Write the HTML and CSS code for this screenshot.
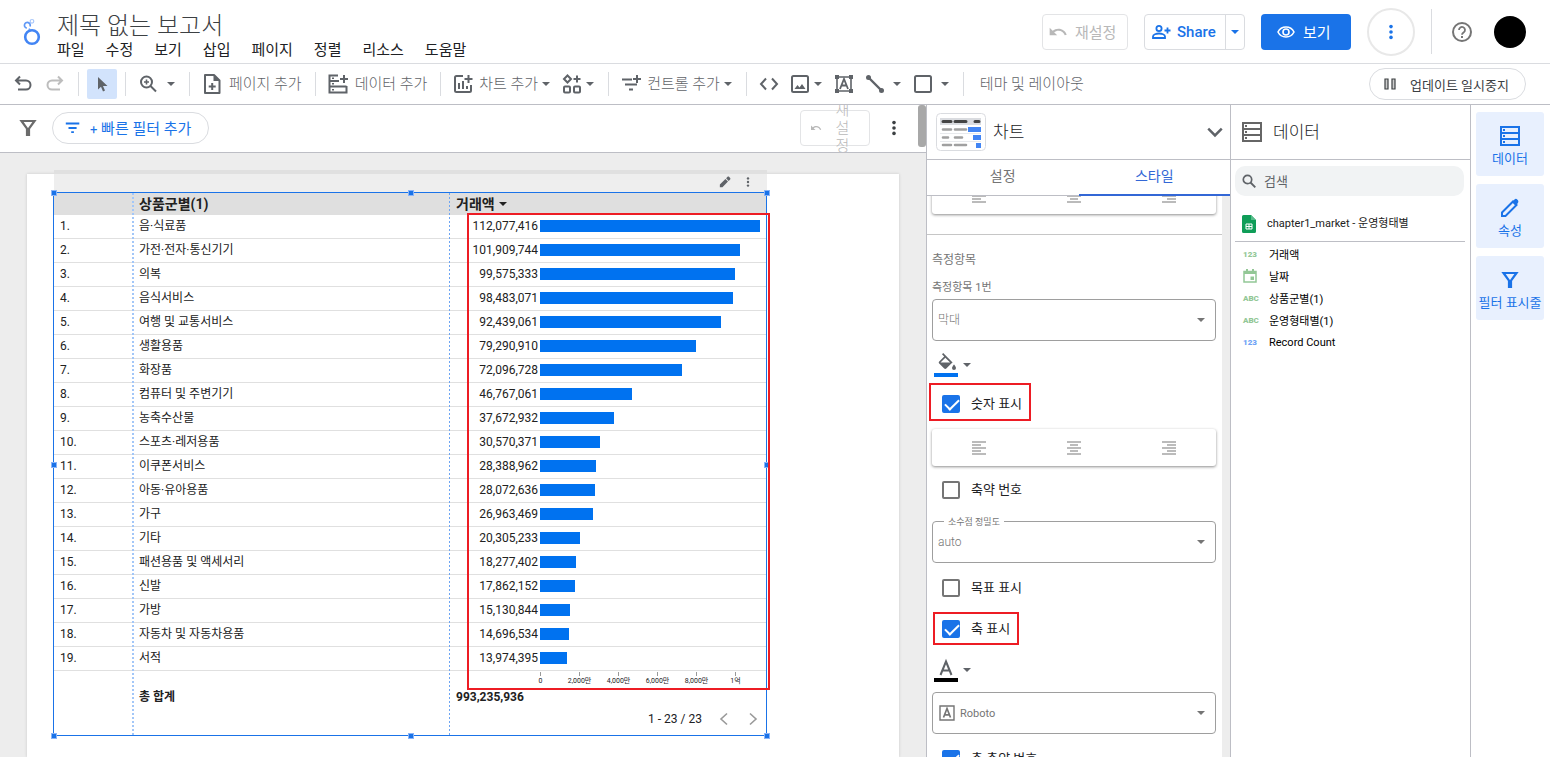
FILE: index.html
```html
<!DOCTYPE html>
<html lang="ko">
    <head>
        <meta charset="UTF-8" />
        <meta name="viewport" content="width=device-width, initial-scale=1.0" />
        <title>제목 없는 보고서</title>
        <link rel="stylesheet" href="styles.css">
    </head>
    <body>
        <!--Icons-->
        <svg class="sprite" aria-hidden="true">
            <symbol id="i-down" viewBox="0 0 10 10"><path d="M1 3h8L5 7z" fill="currentColor"/></symbol>
            <symbol id="i-undo" viewBox="0 0 20 20"><path d="M7 2.500 3 6.500l4 4M3.500 6.500H13a4.500 4.500 0 0 1 0 9H5" fill="none" stroke="currentColor" stroke-width="2"/></symbol>
            <symbol id="i-redo" viewBox="0 0 20 20"><path d="m13 2.500 4 4-4 4M16.500 6.500H7a4.500 4.500 0 0 0 0 9h8" fill="none" stroke="currentColor" stroke-width="2"/></symbol>
            <symbol id="i-reset" viewBox="0 0 24 24"><path d="M12.500 8c-2.650 0-5.050.99-6.900 2.600L2 7v9h9l-3.620-3.620c1.390-1.160 3.160-1.880 5.120-1.880 3.540 0 6.550 2.310 7.600 5.500l2.370-.78C21.080 11.030 17.150 8 12.500 8z" fill="currentColor"/></symbol>
            <symbol id="i-share" viewBox="0 0 20 20"><g fill="none" stroke="currentColor" stroke-width="1.800"><circle cx="8" cy="6.500" r="2.600"/><path d="M2 16v-1.500c0-2 3.500-3 6-3s6 1 6 3V16zM16.500 5.500v6M13.500 8.500h6"/></g></symbol>
            <symbol id="i-eye" viewBox="0 0 20 20"><g fill="none" stroke="currentColor" stroke-width="1.600"><path d="M2 10c1.600-3.200 4.500-5 8-5s6.400 1.800 8 5c-1.600 3.200-4.500 5-8 5s-6.400-1.800-8-5z"/><circle cx="10" cy="10" r="3"/></g></symbol>
            <symbol id="i-more" viewBox="0 0 20 20"><g fill="currentColor"><circle cx="10" cy="4" r="2"/><circle cx="10" cy="10" r="2"/><circle cx="10" cy="16" r="2"/></g></symbol>
            <symbol id="i-help" viewBox="0 0 20 20"><circle cx="10" cy="10" r="9" fill="none" stroke="currentColor" stroke-width="2"/><path d="M7 8a3 3 0 1 1 4.800 2.300c-1 .7-1.800 1.300-1.800 2.500" fill="none" stroke="currentColor" stroke-width="1.800"/><path d="M9 14h2v2H9z" fill="currentColor"/></symbol>
            <symbol id="i-cursor" viewBox="0 0 20 20"><path d="M6 3v12.500l3-2.800 2 4.800 2-.9-2-4.600h4.500z" fill="currentColor"/></symbol>
            <symbol id="i-zoom" viewBox="0 0 20 20"><g fill="none" stroke="currentColor" stroke-width="2"><circle cx="8.500" cy="8" r="5.500"/><path d="m12.500 12 5.500 5.500"/><path d="M8.500 5.500v5M6 8h5" stroke-width="1.600"/></g></symbol>
            <symbol id="i-page" viewBox="0 0 20 20"><path d="M3 1h9l5.500 5.500V19H3z" fill="none" stroke="currentColor" stroke-width="2" stroke-linejoin="round"/><path d="M11.500 1v6h6z" fill="currentColor"/><path d="M10.200 9v7M6.700 12.500h7" stroke="currentColor" stroke-width="2"/></symbol>
            <symbol id="i-data" viewBox="0 0 20 20"><g fill="none" stroke="currentColor" stroke-width="2"><path d="M10 1.500H1.500v17h17V12M1.500 7H11M1.500 12.500h17M16 1v8M12 5h8"/></g><path d="M4 3.500h2v1.500H4zM4 9h2v1.500H4zM4 15h2v1.500H4z" fill="currentColor"/></symbol>
            <symbol id="i-chart" viewBox="0 0 20 20"><path d="M10 2H3.500A1.500 1.500 0 0 0 2 3.500v13A1.500 1.500 0 0 0 3.500 18h13a1.500 1.500 0 0 0 1.500-1.500V11M15.500 1v8M11.500 5h8" fill="none" stroke="currentColor" stroke-width="2"/><path d="M5 9h2v6H5zM9 7h2v8H9zM13 12h2v3h-2z" fill="currentColor"/></symbol>
            <symbol id="i-parts" viewBox="0 0 20 20"><g fill="none" stroke="currentColor" stroke-width="2"><path d="m5.500 1.500 3.500 3.500-3.500 3.500L2 5zM15 1.500v7M11.500 5h7"/><rect x="2" y="12.500" width="6" height="6" rx="1"/><rect x="12" y="12.500" width="6" height="6" rx="1"/></g></symbol>
            <symbol id="i-control" viewBox="0 0 20 20"><path d="M1 5.500h10M4 10.500h12M8 15.500h4M16 1v8M12 5h8" fill="none" stroke="currentColor" stroke-width="2"/></symbol>
            <symbol id="i-code" viewBox="0 0 20 20"><path d="M7 4.500 2 10l5 5.500M13 4.500l5 5.500-5 5.500" fill="none" stroke="currentColor" stroke-width="2"/></symbol>
            <symbol id="i-image" viewBox="0 0 20 20"><rect x="2" y="2" width="16" height="16" rx="1.500" fill="none" stroke="currentColor" stroke-width="2"/><path d="m4.500 15 3-4 2 2.500L12 10l3.500 5z" fill="currentColor"/></symbol>
            <symbol id="i-textbox" viewBox="0 0 20 20"><path d="M3 3h14v14H3z" fill="none" stroke="currentColor" stroke-width="1.600"/><path d="M1 1h4v4H1zM15 1h4v4h-4zM1 15h4v4H1zM15 15h4v4h-4z" fill="currentColor"/><path d="m6 15 4-10 4 10M7.500 11.500h5" fill="none" stroke="currentColor" stroke-width="1.800"/></symbol>
            <symbol id="i-line" viewBox="0 0 20 20"><path d="m3 3 14 14" stroke="currentColor" stroke-width="2.400"/><circle cx="3.500" cy="3.500" r="2.500" fill="currentColor"/><circle cx="16.500" cy="16.500" r="2.500" fill="currentColor"/></symbol>
            <symbol id="i-rect" viewBox="0 0 20 20"><rect x="2" y="2" width="16" height="16" rx="1.500" fill="none" stroke="currentColor" stroke-width="2"/></symbol>
            <symbol id="i-pause" viewBox="0 0 14 14"><path d="M2 2h3v10H2zM9 2h3v10H9z" fill="#ccc" stroke="currentColor" stroke-width="1.200"/></symbol>
            <symbol id="i-funnel" viewBox="0 0 20 20"><path d="M3.500 3h13L11 10.500V17H9v-6.500z" fill="none" stroke="currentColor" stroke-width="2.200"/></symbol>
            <symbol id="i-filter" viewBox="0 0 20 20"><path d="M2 5h15M5 10h9M8 14.500h3" stroke="currentColor" stroke-width="2"/></symbol>
            <symbol id="i-pencil" viewBox="0 0 14 14"><path d="M1 13v-3l6.500-6.500 3 3L4 13zM8.300 2.700 10 1c.5-.5 1.200-.5 1.700 0L13 2.300c.5.500.5 1.200 0 1.700l-1.700 1.700z" fill="currentColor"/></symbol>
            <symbol id="i-edit" viewBox="0 0 20 20"><path d="M2 18v-3.500L13 3.500l3.500 3.500L5.500 18z" fill="none" stroke="currentColor" stroke-width="2"/><path d="m12 4 2.500-2.500c1-1 2-.8 3 .2s1.200 2.300.3 3.200L16 8z" fill="currentColor"/></symbol>
            <symbol id="i-rows" viewBox="0 0 20 20"><path d="M1 1h18v18H1zM1 7h18M1 13h18" fill="none" stroke="currentColor" stroke-width="2"/><path d="M3 3h2v2H3zM3 9h2v2H3zM3 15h2v2H3z" fill="currentColor"/></symbol>
            <symbol id="i-left" viewBox="0 0 14 14"><path d="M0 1h14M0 4h9M0 7h14M0 10h9M0 13h14" stroke="currentColor" stroke-width="1.700"/></symbol>
            <symbol id="i-center" viewBox="0 0 14 14"><path d="M0 1h14M3 4h8M0 7h14M3 10h8M0 13h14" stroke="currentColor" stroke-width="1.700"/></symbol>
            <symbol id="i-right" viewBox="0 0 14 14"><path d="M0 1h14M5 4h9M0 7h14M5 10h9M0 13h14" stroke="currentColor" stroke-width="1.700"/></symbol>
            <symbol id="i-fill" viewBox="0 0 20 20"><path d="M16.600 9.400 7.200 0 6 1.200l2.200 2.200-5 5c-.6.6-.6 1.500 0 2.100l5 5c.6.600 1.500.6 2.100 0l5-5c.5-.5 1-.8 1.300-1.100zM4.500 9.500 9.300 4.700l4.800 4.800zM18 11.500s-2 2.200-2 3.500a2 2 0 0 0 4 0c0-1.300-2-3.500-2-3.500z" fill="currentColor"/></symbol>
            <symbol id="i-font" viewBox="0 0 20 20"><path d="M4.500 17 10 3.500 15.500 17M6.500 12.500h7" fill="none" stroke="currentColor" stroke-width="2"/></symbol>
            <symbol id="i-fontbox" viewBox="0 0 16 16"><path d="M1 1h14v14H1z" fill="none" stroke="currentColor" stroke-width="1.400"/><path d="M4.500 12.500 8 3.500l3.500 9M5.500 9.800h5" fill="none" stroke="currentColor" stroke-width="1.700"/></symbol>
            <symbol id="i-search" viewBox="0 0 14 14"><circle cx="5.500" cy="5.500" r="4.200" fill="none" stroke="currentColor" stroke-width="1.700"/><path d="m8.500 8.500 4.800 4.800" stroke="currentColor" stroke-width="1.900"/></symbol>
            <symbol id="i-sheet" viewBox="0 0 14 18"><path d="M1.500 0H9l5 5v11.500a1.500 1.500 0 0 1-1.500 1.500h-11A1.500 1.500 0 0 1 0 16.500v-15A1.500 1.500 0 0 1 1.500 0z" fill="#0f9d58"/><path d="m9 0 5 5H9z" fill="#57bb8a"/><path d="M4 9h6v5H4zM4 11.500h6M7 9v5" fill="none" stroke="#fff"/></symbol>
            <symbol id="i-date" viewBox="0 0 14 14"><path d="M1 2.500h12V13H1z" fill="none" stroke="currentColor" stroke-width="1.500"/><path d="M1 2h12v3H1zM3 0h2v3H3zM9 0h2v3H9zM7.500 7.500h3.500V11H7.500z" fill="currentColor"/></symbol>
            <symbol id="i-chevron" viewBox="0 0 16 16"><path d="m2 5 6 6 6-6" fill="none" stroke="currentColor" stroke-width="2.200"/></symbol>
            <symbol id="i-prev" viewBox="0 0 12 14"><path d="M9 1.500 3 7l6 5.500" fill="none" stroke="currentColor" stroke-width="1.600"/></symbol>
            <symbol id="i-next" viewBox="0 0 12 14"><path d="m3 1.500 6 5.500-6 5.500" fill="none" stroke="currentColor" stroke-width="1.600"/></symbol>
        </svg>

        <header class="header">
            <svg class="logo" viewBox="0 0 18 28">
                <g fill="none" stroke="#4285f4">
                    <circle cx="9" cy="19" r="6.800" stroke-width="2.600"/>
                    <path d="M3.800 10.200A2.900 2.900 0 1 1 7 8.500" stroke-width="1.700" opacity=".85"/>
                    <path d="M6 10.500 7.500 13" stroke-width="1.700" opacity=".6"/>
                    <circle cx="9" cy="3.300" r="1.800" stroke-width="1.200" opacity=".45"/>
                </g>
            </svg>
            <div class="title">
                <h1>제목 없는 보고서</h1>
                <nav class="menu">
                    <a href="#">파일</a><a href="#">수정</a><a href="#">보기</a><a href="#">삽입</a><a href="#">페이지</a><a href="#">정렬</a><a href="#">리소스</a><a href="#">도움말</a>
                </nav>
            </div>
            <div class="actions">
                <button class="btn btn-reset" disabled><svg class="icon"><use href="#i-reset"/></svg>재설정</button>
                <div class="share">
                    <button class="share-main"><svg class="icon"><use href="#i-share"/></svg>Share</button>
                    <button class="share-more" aria-label="공유 옵션"><svg class="arrow"><use href="#i-down"/></svg></button>
                </div>
                <button class="btn btn-view"><svg class="icon"><use href="#i-eye"/></svg>보기</button>
                <button class="btn-circle" aria-label="더보기"><svg class="icon-sm"><use href="#i-more"/></svg></button>
                <span class="actions-line"></span>
                <button class="help" aria-label="도움말"><svg class="icon"><use href="#i-help"/></svg></button>
                <span class="avatar"></span>
            </div>
        </header>

        <div class="toolbar">
            <button class="tool tool-step" aria-label="실행취소"><svg class="icon"><use href="#i-undo"/></svg></button>
            <button class="tool tool-step tool-off" aria-label="다시 실행"><svg class="icon"><use href="#i-redo"/></svg></button>
            <span class="sep sep-tight"></span>
            <button class="tool tool-active" aria-label="선택"><svg class="icon"><use href="#i-cursor"/></svg></button>
            <span class="sep sep-tight"></span>
            <button class="tool tool-wide" aria-label="확대/축소"><svg class="icon"><use href="#i-zoom"/></svg><svg class="arrow"><use href="#i-down"/></svg></button>
            <span class="sep"></span>
            <button class="tool"><svg class="icon"><use href="#i-page"/></svg><span>페이지 추가</span></button>
            <span class="sep"></span>
            <button class="tool"><svg class="icon"><use href="#i-data"/></svg><span>데이터 추가</span></button>
            <span class="sep"></span>
            <button class="tool tool-narrow"><svg class="icon"><use href="#i-chart"/></svg><span>차트 추가</span><svg class="arrow"><use href="#i-down"/></svg></button>
            <button class="tool tool-next tool-narrow" aria-label="구성요소"><svg class="icon"><use href="#i-parts"/></svg><svg class="arrow"><use href="#i-down"/></svg></button>
            <span class="sep"></span>
            <button class="tool tool-narrow"><svg class="icon"><use href="#i-control"/></svg><span>컨트롤 추가</span><svg class="arrow"><use href="#i-down"/></svg></button>
            <span class="sep"></span>
            <button class="tool" aria-label="URL 삽입"><svg class="icon"><use href="#i-code"/></svg></button>
            <button class="tool tool-next tool-narrow" aria-label="이미지"><svg class="icon"><use href="#i-image"/></svg><svg class="arrow"><use href="#i-down"/></svg></button>
            <button class="tool tool-next" aria-label="텍스트"><svg class="icon"><use href="#i-textbox"/></svg></button>
            <button class="tool tool-next" aria-label="선"><svg class="icon"><use href="#i-line"/></svg><svg class="arrow"><use href="#i-down"/></svg></button>
            <button class="tool tool-next" aria-label="도형"><svg class="icon"><use href="#i-rect"/></svg><svg class="arrow"><use href="#i-down"/></svg></button>
            <span class="sep"></span>
            <button class="tool tool-text"><span>테마 및 레이아웃</span></button>
            <button class="pause"><svg class="icon-xs"><use href="#i-pause"/></svg>업데이트 일시중지</button>
        </div>

        <div class="workspace">
            <main class="editor">
                <div class="filterbar">
                    <svg class="icon funnel"><use href="#i-funnel"/></svg>
                    <button class="quick"><svg class="icon-sm"><use href="#i-filter"/></svg><span><small>+</small> 빠른 필터 추가</span></button>
                    <button class="reset-small" disabled><svg class="icon-xs"><use href="#i-reset"/></svg><span>재설정</span></button>
                    <button class="kebab" aria-label="더보기"><svg class="icon-sm"><use href="#i-more"/></svg></button>
                    <span class="scroll-thumb"></span>
                </div>
                <div class="canvas">
                    <div class="page">
                        <section class="widget">
                            <div class="widget-tools">
                                <svg class="icon-xs"><use href="#i-pencil"/></svg>
                                <svg class="icon-xs"><use href="#i-more"/></svg>
                            </div>
                            <div class="widget-body">
                                <table class="data">
                                    <colgroup><col class="col-index"><col class="col-name"><col></colgroup>
                                    <thead>
                                        <tr><th></th><th>상품군별(1)</th><th>거래액 <svg class="arrow"><use href="#i-down"/></svg></th></tr>
                                    </thead>
                                    <tbody id="rows"></tbody>
                                    <tfoot>
                                        <tr class="axis-row"><td></td><td></td><td><div class="axis"><span>0</span><span>2,000만</span><span>4,000만</span><span>6,000만</span><span>8,000만</span><span>1억</span></div></td></tr>
                                        <tr class="total"><td></td><td>총 합계</td><td>993,235,936</td></tr>
                                    </tfoot>
                                </table>
                                <div class="pager">
                                    <span>1 - 23 / 23</span>
                                    <button aria-label="이전"><svg class="icon-xs"><use href="#i-prev"/></svg></button>
                                    <button aria-label="다음"><svg class="icon-xs"><use href="#i-next"/></svg></button>
                                </div>
                                <i class="guide guide-index"></i>
                                <i class="guide guide-name"></i>
                                <i class="handle top left"></i><i class="handle top mid"></i><i class="handle top right"></i>
                                <i class="handle center left"></i><i class="handle center right"></i>
                                <i class="handle bottom left"></i><i class="handle bottom mid"></i><i class="handle bottom right"></i>
                                <i class="mark mark-bars"></i>
                            </div>
                        </section>
                    </div>
                </div>
            </main>

            <aside class="props">
                <div class="panel-head">
                    <svg class="thumb" viewBox="0 0 50 38">
                        <rect x=".5" y=".5" width="49" height="37" rx="4" fill="#fff" stroke="#dadce0"/>
                        <path d="M4 5h41v7H4z" fill="#dadce0"/>
                        <path d="M4 20.500h41M4 28.500h41" stroke="#e8eaed"/>
                        <path d="M7 8.500h8M19 8.500h11M39 8.500h4" stroke="#444" stroke-width="3" stroke-linecap="round"/>
                        <path d="M7 16.500h8M19 16.500h11M7 24.500h5M19 24.500h7M7 32h8M19 32h11" stroke="#a0a0a0" stroke-width="2.600" stroke-linecap="round"/>
                        <path d="M32 14h13v5H32zM37 22h8v5h-8zM40 30h5v5h-5z" fill="#4285f4"/>
                    </svg>
                    <h2>차트</h2>
                    <svg class="chevron"><use href="#i-chevron"/></svg>
                </div>
                <div class="tabs">
                    <button class="tab">설정</button>
                    <button class="tab tab-active">스타일</button>
                </div>
                <div class="pane">
                    <div class="pane-content">
                        <div class="align align-first">
                            <button aria-label="왼쪽"><svg class="icon-xs"><use href="#i-left"/></svg></button>
                            <button aria-label="가운데"><svg class="icon-xs"><use href="#i-center"/></svg></button>
                            <button aria-label="오른쪽"><svg class="icon-xs"><use href="#i-right"/></svg></button>
                        </div>
                        <hr>
                        <h3>측정항목</h3>
                        <label class="field-label" for="metric">측정항목 1번</label>
                        <div class="select">
                            <select id="metric"><option>막대</option></select>
                            <svg class="arrow"><use href="#i-down"/></svg>
                        </div>
                        <button class="color" aria-label="막대 색상">
                            <span class="swatch swatch-blue"><svg class="icon"><use href="#i-fill"/></svg></span>
                            <svg class="arrow"><use href="#i-down"/></svg>
                        </button>
                        <div class="check">
                            <input type="checkbox" id="show-number" checked><label for="show-number">숫자 표시</label>
                            <i class="mark mark-number"></i>
                        </div>
                        <div class="align">
                            <button aria-label="왼쪽"><svg class="icon-xs"><use href="#i-left"/></svg></button>
                            <button aria-label="가운데"><svg class="icon-xs"><use href="#i-center"/></svg></button>
                            <button aria-label="오른쪽"><svg class="icon-xs"><use href="#i-right"/></svg></button>
                        </div>
                        <div class="check">
                            <input type="checkbox" id="compact"><label for="compact">축약 번호</label>
                        </div>
                        <div class="select">
                            <label for="precision">소수점 정밀도</label>
                            <select id="precision"><option>auto</option></select>
                            <svg class="arrow"><use href="#i-down"/></svg>
                        </div>
                        <div class="check">
                            <input type="checkbox" id="show-target"><label for="show-target">목표 표시</label>
                        </div>
                        <div class="check">
                            <input type="checkbox" id="show-axis" checked><label for="show-axis">축 표시</label>
                            <i class="mark mark-axis"></i>
                        </div>
                        <button class="color" aria-label="글꼴 색상">
                            <span class="swatch"><svg class="icon"><use href="#i-font"/></svg></span>
                            <svg class="arrow"><use href="#i-down"/></svg>
                        </button>
                        <div class="select select-font">
                            <svg class="font-icon"><use href="#i-fontbox"/></svg>
                            <select aria-label="글꼴"><option>Roboto</option></select>
                            <svg class="arrow"><use href="#i-down"/></svg>
                        </div>
                        <div class="check">
                            <input type="checkbox" id="axis-compact" checked><label for="axis-compact">축 축약 번호</label>
                        </div>
                    </div>
                </div>
            </aside>

            <aside class="fields">
                <div class="panel-head">
                    <svg class="icon"><use href="#i-rows"/></svg>
                    <h2>데이터</h2>
                </div>
                <div class="search">
                    <svg class="icon-xs"><use href="#i-search"/></svg>
                    <input type="text" placeholder="검색" aria-label="검색">
                </div>
                <div class="source"><svg class="sheet"><use href="#i-sheet"/></svg>chapter1_market - 운영형태별</div>
                <ul class="field-list">
                    <li><b>123</b>거래액</li>
                    <li><b><svg class="icon-xs"><use href="#i-date"/></svg></b>날짜</li>
                    <li><b>ABC</b>상품군별(1)</li>
                    <li><b>ABC</b>운영형태별(1)</li>
                    <li><b class="blue">123</b>Record Count</li>
                </ul>
            </aside>

            <nav class="rail">
                <button><svg class="icon"><use href="#i-rows"/></svg>데이터</button>
                <button><svg class="icon"><use href="#i-edit"/></svg>속성</button>
                <button><svg class="icon"><use href="#i-funnel"/></svg>필터 표시줄</button>
            </nav>
        </div>

        <script>
            //Table Rows Script
            const items = [
                ["음·식료품", 112077416],
                ["가전·전자·통신기기", 101909744],
                ["의복", 99575333],
                ["음식서비스", 98483071],
                ["여행 및 교통서비스", 92439061],
                ["생활용품", 79290910],
                ["화장품", 72096728],
                ["컴퓨터 및 주변기기", 46767061],
                ["농축수산물", 37672932],
                ["스포츠·레저용품", 30570371],
                ["이쿠폰서비스", 28388962],
                ["아동·유아용품", 28072636],
                ["가구", 26963469],
                ["기타", 20305233],
                ["패션용품 및 액세서리", 18277402],
                ["신발", 17862152],
                ["가방", 15130844],
                ["자동차 및 자동차용품", 14696534],
                ["서적", 13974395]
            ];
            const max = items[0][1];

            document.querySelector("#rows").innerHTML = items.map(([name, value], i) => `
                <tr>
                    <td>${i + 1}.</td>
                    <td>${name}</td>
                    <td><div class="value">
                        <span class="num">${value.toLocaleString("en-US")}</span>
                        <span class="track"><span class="bar" style="width: ${value / max * 100}%"></span></span>
                    </div></td>
                </tr>`).join("");
        </script>
    </body>
</html>
```

FILE: styles.css
```css
:root {
    --blue: #1a73e8;
    --bar: #0072f0;
    --line: #dadce0;
    --panel-line: #bdbec5;
    --gray: #5f6368;
    --canvas: #ededed;
    --red: #ed1c24;
}
* {
    box-sizing: border-box;
}
body {
    margin: 0;
    height: 100vh;
    display: flex;
    flex-direction: column;
    overflow: hidden;
    background-color: white;
    color: #202124;
    font-family: Roboto, "Noto Sans CJK KR", sans-serif;
    font-size: 12px;
}
button, input, select {
    font: inherit;
    color: inherit;
    margin: 0;
    padding: 0;
    border: 0;
    background: none;
}
a {
    color: inherit;
    text-decoration: none;
}
h1, h2, h3, ul {
    margin: 0;
    padding: 0;
    font-weight: 300;
}
svg {
    display: block;
    flex: none;
}
.sprite {
    position: absolute;
    width: 0;
    height: 0;
}
.icon { width: 20px; height: 20px; }
.icon-sm { width: 18px; height: 18px; }
.icon-xs { width: 14px; height: 14px; }
.arrow { width: 10px; height: 10px; }

/* Header */
.header {
    flex: none;
    height: 64px;
    display: flex;
    align-items: center;
    padding: 0 24px 0 23px;
    border-bottom: 1px solid var(--line);
}
.logo {
    width: 18px;
    height: 28px;
}
.title {
    margin-left: 16px;
}
.title h1 {
    font-size: 24px;
    line-height: 28px;
    margin-top: 9px;
    color: #3c4043;
}
.menu {
    display: flex;
    gap: 21px;
    font-size: 15px;
    line-height: 20px;
}
.actions {
    margin-left: auto;
    display: flex;
    align-items: center;
    gap: 16px;
    font-size: 15px;
}
.btn {
    height: 36px;
    display: flex;
    align-items: center;
    border-radius: 4px;
}
.btn-reset {
    width: 86px;
    padding-left: 5px;
    gap: 7px;
    border: 1px solid #e3e4e6;
    color: #b8b8b8;
}
.share {
    display: flex;
    width: 101px;
    height: 36px;
    border: 1px solid var(--line);
    border-radius: 4px;
    color: var(--blue);
    font-weight: 500;
}
.share-main {
    display: flex;
    align-items: center;
    gap: 6px;
    width: 81px;
    padding-left: 6px;
    border-right: 1px solid var(--line);
}
.share-more {
    flex: 1;
    display: flex;
    align-items: center;
    justify-content: center;
}
.btn-view {
    width: 90px;
    padding-left: 15px;
    gap: 7px;
    background-color: var(--blue);
    color: white;
}
.btn-circle {
    width: 48px;
    height: 48px;
    display: flex;
    align-items: center;
    justify-content: center;
    border: 2px solid #e8e8e8;
    border-radius: 50%;
    color: var(--blue);
}
.actions-line {
    width: 1px;
    height: 45px;
    background-color: var(--line);
}
.help {
    margin: 0 6px 0 4px;
    color: #757575;
}
.avatar {
    width: 32px;
    height: 32px;
    border-radius: 50%;
    background-color: black;
}

/* Toolbar */
.toolbar {
    flex: none;
    height: 41px;
    display: flex;
    align-items: center;
    padding: 0 24px 0 10px;
    border-bottom: 1px solid var(--panel-line);
    color: var(--gray);
    font-size: 15px;
    font-weight: 300;
    white-space: nowrap;
}
.tool {
    height: 30px;
    display: flex;
    align-items: center;
    gap: 7px;
}
.tool span {
    padding-bottom: 3px;
}
.tool-step {
    width: 32px;
    padding-left: 3px;
}
.tool-off {
    width: 28px;
    color: #bdbdbd;
}
.tool-active {
    width: 30px;
    justify-content: center;
    border-radius: 2px;
    background-color: #d2e3fc;
}
.tool-wide {
    gap: 8px;
}
.tool-narrow {
    gap: 3px;
}
.tool-narrow span {
    padding-left: 3px;
}
.tool-next {
    margin-left: 11px;
}
.tool-text {
    margin-left: 4px;
}
.sep {
    flex: none;
    width: 1px;
    height: 24px;
    margin: 0 12px 0 13px;
    background-color: var(--line);
}
.sep-tight {
    margin: 0 8px;
}
.sep-tight + .tool-wide {
    margin-left: 4px;
}
.pause {
    margin-left: auto;
    width: 157px;
    height: 32px;
    display: flex;
    align-items: center;
    gap: 13px;
    padding-left: 13px;
    border: 1px solid var(--line);
    border-radius: 16px;
    color: #3c4043;
    font-size: 13px;
    font-weight: 400;
}

.workspace {
    flex: 1;
    min-height: 0;
    display: flex;
}

/* Editor */
.editor {
    flex: 1;
    min-width: 0;
    display: flex;
    flex-direction: column;
}
.filterbar {
    position: relative;
    flex: none;
    height: 48px;
    display: flex;
    align-items: center;
    padding: 0 23px 2px 18px;
    border-bottom: 1px solid var(--panel-line);
    overflow: hidden;
    font-size: 15px;
    font-weight: 300;
}
.funnel {
    color: #6b6b6b;
}
.quick {
    width: 157px;
    height: 32px;
    margin-left: 14px;
    display: flex;
    align-items: center;
    gap: 8px;
    padding-left: 11px;
    border: 1px solid var(--line);
    border-radius: 16px;
    color: var(--blue);
    font-weight: 400;
}
.quick small {
    font-size: 13px;
}
.reset-small {
    width: 70px;
    height: 36px;
    margin-left: auto;
    display: flex;
    align-items: center;
    padding-left: 9px;
    gap: 13px;
    border: 1px solid #e3e4e6;
    border-radius: 4px;
    color: #b8b8b8;
}
.reset-small svg {
    width: 12px;
}
.reset-small span {
    width: 15px;
    line-height: 18px;
    word-break: break-all;
}
.kebab {
    margin-left: 15px;
    color: #3c4043;
}
.scroll-thumb {
    position: absolute;
    top: 0;
    right: 0;
    width: 8px;
    height: 42px;
    border-radius: 3px;
    background-color: #a8a8a8;
}
.canvas {
    flex: 1;
    min-height: 0;
    padding: 21px 27px 0;
    background-color: var(--canvas);
}
.page {
    position: relative;
    height: 100%;
    background-color: white;
    box-shadow: 0 0 3px rgba(0, 0, 0, 0.15);
}

/* Table widget, placed on the report canvas */
.widget {
    position: absolute;
    left: 26px;
    top: -4px;
    width: 714px;
}
.widget-tools {
    height: 22px;
    margin-left: 1px;
    display: flex;
    justify-content: flex-end;
    align-items: center;
    gap: 10px;
    padding: 0 12px 2px 0;
    border-top: 4px solid #e0e0e0;
    background-color: #eee;
    color: var(--gray);
}
.widget-tools svg {
    width: 12px;
    height: 12px;
}
.widget-tools svg + svg {
    width: 14px;
}
.widget-body {
    position: relative;
    border: 1px solid var(--blue);
}
.data {
    width: 100%;
    table-layout: fixed;
    border-collapse: separate;
    border-spacing: 0;
    color: #212121;
}
.col-index { width: 79px; }
.col-name { width: 317px; }
.data th {
    height: 22px;
    padding: 0 6px;
    background-color: #dfdfdf;
    text-align: left;
    font-size: 14px;
    line-height: 16px;
    font-weight: 700;
}
.data th .arrow {
    display: inline-block;
}
.data td {
    height: 24px;
    padding: 0 6px;
    line-height: 16px;
}
.data tbody td {
    padding-bottom: 2px;
    border-bottom: 1px solid #e0e0e0;
}
.value {
    display: flex;
    align-items: center;
    gap: 2px;
}
.num {
    width: 82px;
    text-align: right;
}
.track {
    flex: 1;
}
.bar {
    display: block;
    height: 12px;
    background-color: var(--bar);
}
.data .axis-row td {
    height: 16px;
}
.axis {
    display: flex;
    margin-left: 65px;
    font-size: 7px;
    line-height: 10px;
}
.axis span {
    flex: 0 0 39px;
    text-align: center;
}
.axis span::before {
    content: "";
    display: block;
    width: 1px;
    height: 4px;
    margin: 0 auto;
    background-color: #999;
}
.data .total td {
    height: 20px;
    font-weight: 700;
}
.pager {
    height: 28px;
    display: flex;
    align-items: center;
    justify-content: flex-end;
    gap: 15px;
    padding: 0 6px 4px 0;
}
.pager button {
    color: #999;
}
.guide {
    position: absolute;
    top: 0;
    bottom: 0;
    width: 1px;
    background: repeating-linear-gradient(#6ea5f2 0 2px, transparent 2px 4px);
}
.guide-index {
    left: 78px;
    width: 2px;
    background: repeating-linear-gradient(#a3c7f8 0 2px, transparent 2px 4px);
}
.guide-name {
    left: 395px;
}
.handle {
    position: absolute;
    width: 6px;
    height: 6px;
    background-color: var(--blue);
    border: 1px solid #8ab4f8;
}
.top { top: -3px; }
.center { top: calc(50% - 2px); }
.bottom { bottom: -4px; }
.left { left: -3px; }
.mid { left: calc(50% - 2px); }
.right { right: -4px; }
.mark {
    position: absolute;
    border: 2px solid var(--red);
    pointer-events: none;
}
.mark-bars {
    left: 413px;
    top: 20px;
    right: -4px;
    bottom: 45px;
}

/* Properties panel */
.panel-head {
    flex: none;
    height: 55px;
    display: flex;
    align-items: center;
    border-bottom: 1px solid var(--panel-line);
}
.panel-head h2 {
    font-size: 17px;
    line-height: 24px;
}
.props {
    flex: none;
    width: 304px;
    display: flex;
    flex-direction: column;
    border-left: 1px solid var(--panel-line);
}
.thumb {
    width: 50px;
    height: 38px;
    margin: 0 7px 0 9px;
}
.chevron {
    width: 18px;
    height: 18px;
    margin: 0 6px 0 auto;
    color: var(--gray);
}
.tabs {
    flex: none;
    height: 36px;
    display: flex;
    border-bottom: 1px solid var(--panel-line);
}
.tab {
    flex: 1;
    height: 36px;
    padding-bottom: 4px;
    border-bottom: 2px solid transparent;
    color: #757575;
    font-size: 14px;
}
.tab-active {
    border-color: #3367d6;
    color: #3367d6;
}
.pane {
    flex: 1;
    min-height: 0;
    overflow: hidden;
    border-right: 8px solid var(--canvas);
    color: #757575;
}
.pane-content {
    padding: 0 6px 0 5px;
}
.pane hr {
    margin: 20px -6px 0 -5px;
    border: 0;
    border-top: 1px solid #c6c6c6;
}
.pane h3 {
    margin-top: 15px;
    font-size: 12px;
    line-height: 20px;
    font-weight: 400;
}
.align {
    height: 37px;
    display: flex;
    justify-content: space-around;
    margin: 4px 0;
    border-radius: 3px;
    box-shadow: 0 1px 3px rgba(0, 0, 0, 0.45);
    color: #a5a5a5;
}
.align-first {
    margin-top: -19px;
}
.field-label {
    display: block;
    margin-top: 10px;
    font-size: 11px;
    line-height: 16px;
}
.select {
    position: relative;
    height: 42px;
    display: flex;
    align-items: center;
    margin: 10px 0 5px;
    border: 1px solid #9e9e9e;
    border-radius: 4px;
}
.field-label + .select {
    margin-top: 3px;
}
.select label {
    position: absolute;
    left: 11px;
    top: -6px;
    padding: 0 4px;
    background-color: white;
    font-size: 9px;
    line-height: 12px;
}
.select select {
    flex: 1;
    height: 40px;
    padding-left: 5px;
    appearance: none;
    outline: none;
    font-size: 12px;
    font-weight: 300;
}
.select-font select {
    font-size: 11px;
    font-weight: 400;
}
.select .arrow {
    margin-right: 9px;
}
.font-icon {
    width: 16px;
    height: 16px;
    margin-left: 6px;
}
.color {
    height: 24px;
    display: flex;
    align-items: center;
    gap: 4px;
    margin: 8px 0 7px 2px;
    color: var(--gray);
}
.select + .color {
    margin-top: 12px;
}
.swatch {
    width: 24px;
    padding-left: 2px;
    border-bottom: 4px solid black;
}
.swatch-blue {
    border-color: var(--bar);
}
.check {
    position: relative;
    height: 41px;
    display: flex;
    align-items: center;
    gap: 11px;
    padding: 0 0 2px 10px;
    color: #202124;
    font-size: 13px;
}
.check label {
    padding-bottom: 2px;
}
.check input {
    position: relative;
    width: 18px;
    height: 18px;
    appearance: none;
    border: 2px solid #757575;
    border-radius: 2px;
}
.check input:checked {
    border-color: var(--blue);
    background-color: var(--blue);
}
.check input:checked::after {
    content: "";
    position: absolute;
    left: 4px;
    top: -1px;
    width: 6px;
    height: 12px;
    border: solid white;
    border-width: 0 2px 2px 0;
    transform: rotate(45deg);
}
.mark-number {
    left: -3px;
    top: -1px;
    width: 102px;
    height: 38px;
}
.mark-axis {
    left: 1px;
    top: 3px;
    width: 86px;
    height: 33px;
}

/* Data panel */
.fields {
    flex: none;
    width: 241px;
    border-left: 1px solid var(--panel-line);
    border-right: 1px solid var(--panel-line);
}
.fields .panel-head {
    padding-left: 11px;
    gap: 11px;
}
.fields .panel-head svg {
    color: #666;
}
.search {
    height: 30px;
    margin: 6px 6px 0 4px;
    display: flex;
    align-items: center;
    gap: 8px;
    padding: 0 7px;
    border-radius: 10px;
    background-color: #f1f3f4;
    color: var(--gray);
    font-size: 13px;
}
.search input {
    flex: 1;
    min-width: 0;
    outline: none;
}
.search input::placeholder {
    color: var(--gray);
}
.source {
    height: 46px;
    margin: 0 5px 0 4px;
    display: flex;
    align-items: center;
    gap: 11px;
    padding: 10px 0 0 7px;
    border-bottom: 1px solid var(--panel-line);
    font-size: 11px;
    line-height: 16px;
    color: #212121;
}
.sheet {
    width: 14px;
    height: 18px;
}
.field-list {
    list-style: none;
    padding-top: 1px;
    color: black;
    font-weight: 400;
    font-size: 11px;
}
.field-list li {
    height: 22px;
    display: flex;
    align-items: center;
}
.field-list b {
    width: 26px;
    margin-left: 12px;
    color: #93c796;
    font-size: 8px;
    font-weight: 900;
}
.field-list .blue {
    color: #6ea2f6;
}

/* Side rail */
.rail {
    flex: none;
    width: 79px;
    display: flex;
    flex-direction: column;
    gap: 8px;
    padding: 7px 6px 0 5px;
}
.rail button {
    height: 64px;
    display: flex;
    flex-direction: column;
    align-items: center;
    justify-content: center;
    gap: 3px;
    padding-top: 6px;
    border-radius: 3px;
    background-color: #e8f0fe;
    color: var(--blue);
    font-size: 13px;
    line-height: 20px;
    white-space: nowrap;
}
```
